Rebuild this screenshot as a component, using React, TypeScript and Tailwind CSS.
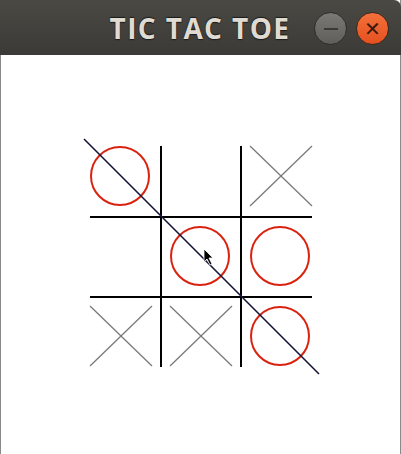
const cells: ("O" | "X" | "")[] = ["O", "", "X", "", "O", "O", "X", "X", "O"];

function Board() {
  const xs = [121, 201, 281];
  const ys = [176, 256, 336];
  return (
    <svg width="401" height="399" viewBox="0 55 401 399" className="block">
      <g stroke="#000" strokeWidth="2">
        <line x1="161" y1="146" x2="161" y2="367" />
        <line x1="241" y1="146" x2="241" y2="367" />
        <line x1="90" y1="217" x2="312" y2="217" />
        <line x1="90" y1="297" x2="312" y2="297" />
      </g>
      {cells.map((c, i) => {
        const cx = xs[i % 3];
        const cy = ys[Math.floor(i / 3)];
        if (c === "O")
          return <circle key={i} cx={cx - 1} cy={cy} r="29" fill="none" stroke="#d9230f" strokeWidth="2" />;
        if (c === "X")
          return (
            <g key={i} stroke="#7a7a7a" strokeWidth="1.3">
              <line x1={cx - 31} y1={cy - 30} x2={cx + 31} y2={cy + 30} />
              <line x1={cx + 31} y1={cy - 30} x2={cx - 31} y2={cy + 30} />
            </g>
          );
        return null;
      })}
      <line x1="84" y1="139" x2="319" y2="374" stroke="#151538" strokeWidth="1.6" />
      <path d="M204 249 L204 262 L207 259 L210 265 L212 264 L209 258 L213 258 Z" fill="#000" stroke="#fff" strokeWidth="0.8" />
    </svg>
  );
}

export default function App() {
  return (
    <div className="w-[401px] h-[454px] bg-white overflow-hidden">
      <div className="h-full flex flex-col border-x border-[#8a8a8a]">
        <div className="h-[55px] shrink-0 bg-gradient-to-b from-[#4a4944] to-[#3b3a36] rounded-tr-[7px] flex items-center -mx-px">
          <div className="flex-1 flex justify-center pl-[86px]">
            <span className="text-[28px] font-bold text-[#dfdbd2] tracking-[1.4px] [font-family:'Open_Sans',sans-serif] [text-shadow:0_1px_1px_#1b1b1a,0_-1px_1px_#1b1b1a]">
              TIC TAC TOE
            </span>
          </div>
          <div className="flex items-center gap-[9px] pr-[12px] pt-[2px]">
            <div className="w-[33px] h-[33px] rounded-full bg-gradient-to-b from-[#7a7975] to-[#5f5e5a] border border-[#2e2d2a] flex items-center justify-center">
              <div className="w-[14px] h-[2px] bg-[#3a3936]" />
            </div>
            <div className="w-[33px] h-[33px] rounded-full bg-gradient-to-b from-[#f4703a] to-[#e4501e] border border-[#3a2a22] flex items-center justify-center text-[#3a1a0c] text-[20px] leading-none [font-family:'DejaVu_Sans',sans-serif]">
              ✕
            </div>
          </div>
        </div>
        <div className="flex-1 -mx-px">
          <Board />
        </div>
      </div>
    </div>
  );
}
